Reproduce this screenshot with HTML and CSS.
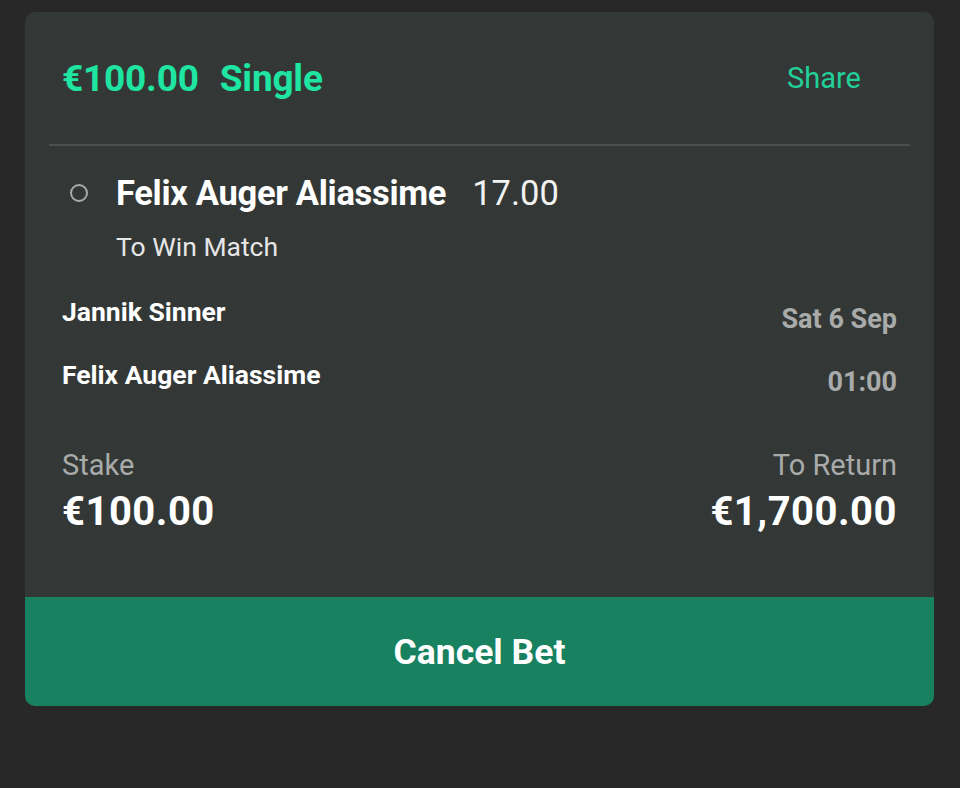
FILE: index.html
```html
<!DOCTYPE html>
<html lang="en">
<head>
  <meta charset="UTF-8">
  <meta name="viewport" content="width=device-width, initial-scale=1.0">
  <title>Bet Receipt</title>
  <link rel="stylesheet" href="styles.css">
</head>
<body>
  <div class="bet-card">
    <div class="bet-header">
      <div class="bet-title"><span>€100.00</span><span>Single</span></div>
      <a class="share-link" href="#">Share</a>
    </div>

    <div class="selection">
      <div class="selection-row">
        <span class="radio"></span>
        <span class="selection-name">Felix Auger Aliassime</span>
        <span class="selection-odds">17.00</span>
      </div>
      <div class="market">To Win Match</div>
    </div>

    <div class="event">
      <div class="event-row">
        <span class="team">Jannik Sinner</span>
        <span class="event-meta">Sat 6 Sep</span>
      </div>
      <div class="event-row">
        <span class="team">Felix Auger Aliassime</span>
        <span class="event-meta">01:00</span>
      </div>
    </div>

    <div class="totals">
      <div class="total">
        <div class="total-label">Stake</div>
        <div class="total-value">€100.00</div>
      </div>
      <div class="total total-right">
        <div class="total-label">To Return</div>
        <div class="total-value">€1,700.00</div>
      </div>
    </div>

    <button class="cancel-btn">Cancel Bet</button>
  </div>
</body>
</html>
```

FILE: styles.css
```css
body {
  margin: 0;
  padding: 12px 26px 0 25px;
  background-color: #282828;
  font-family: Roboto, 'Liberation Sans', sans-serif;
  color: #fff;
  height: 776px;
}
.bet-card {
  background-color: #333836;
  border-radius: 10px;
  overflow: hidden;
  height: 694px;
  display: flex;
  flex-direction: column;
}
.bet-header {
  display: flex;
  justify-content: space-between;
  align-items: center;
  margin: 0 24px;
  height: 132px;
  border-bottom: 2px solid #4a504e;
}
.bet-title {
  display: flex;
  gap: 21px;
  padding-left: 13px;
  color: #1ee6a2;
  font-size: 37px;
  font-weight: 700;
  letter-spacing: -0.2px;
}
.share-link {
  color: #22d09a;
  font-size: 29px;
  text-decoration: none;
  margin-right: 49px;
  margin-top: 0;
}
.selection {
  padding: 27px 0 0 45px;
}
.selection-row {
  display: flex;
  align-items: center;
}
.radio {
  width: 14px;
  height: 14px;
  border: 2px solid #a8aaa9;
  border-radius: 50%;
  margin-right: 28px;
}
.selection-name {
  font-size: 34.5px;
  font-weight: 700;
  letter-spacing: -0.3px;
}
.selection-odds {
  font-size: 34.5px;
  margin-left: 26px;
  color: #f2f2f2;
}
.market {
  margin: 18px 0 0 46px;
  font-size: 26.5px;
  color: #e6e6e6;
}
.event {
  padding: 34px 37px 0 37px;
}
.event-row {
  display: flex;
  justify-content: space-between;
  height: 63px;
}
.team {
  font-size: 26.5px;
  font-weight: 700;
}
.event-meta {
  margin-top: 7px;
  font-size: 27px;
  font-weight: 700;
  color: #a9abaa;
}
.totals {
  display: flex;
  justify-content: space-between;
  padding: 26px 37px 0 37px;
}
.total-right {
  text-align: right;
}
.total-label {
  font-size: 29px;
  color: #a9abaa;
}
.total-value {
  margin-top: 6px;
  font-size: 40px;
  font-weight: 700;
  letter-spacing: 0.5px;
}
.cancel-btn {
  margin-top: auto;
  height: 109px;
  border: none;
  background-color: #178160;
  color: #fff;
  font-family: Roboto, 'Liberation Sans', sans-serif;
  font-size: 35.5px;
  font-weight: 700;
  cursor: pointer;
}
```
